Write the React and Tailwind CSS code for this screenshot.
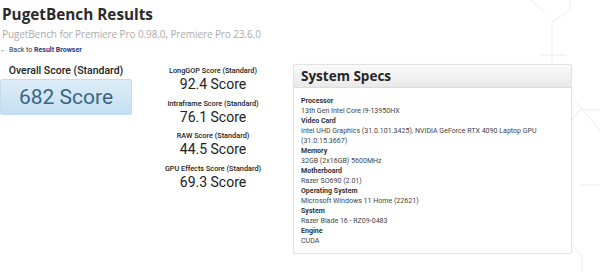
import React from "react";

const specs = [
  ["Processor", ["13th Gen Intel Core i9-13950HX"]],
  ["Video Card", ["Intel UHD Graphics (31.0.101.3425), NVIDIA GeForce RTX 4090 Laptop GPU", "(31.0.15.3667)"]],
  ["Memory", ["32GB (2x16GB) 5600MHz"]],
  ["Motherboard", ["Razer SO690 (2.01)"]],
  ["Operating System", ["Microsoft Windows 11 Home (22621)"]],
  ["System", ["Razer Blade 16 - RZ09-0483"]],
  ["Engine", ["CUDA"]],
];

const scores = [
  ["LongGOP Score (Standard)", "92.4 Score"],
  ["Intraframe Score (Standard)", "76.1 Score"],
  ["RAW Score (Standard)", "44.5 Score"],
  ["GPU Effects Score (Standard)", "69.3 Score"],
];

function Circuit() {
  return (
    <svg className="absolute right-0 top-0" width="90" height="272" viewBox="0 0 90 272" fill="none" stroke="#ececec" strokeWidth="1">
      <path d="M60 0 L60 10 L42 22 L42 70" />
      <circle cx="42" cy="72" r="1.5" />
      <path d="M30 55 L56 55" />
      <path d="M44 95 L44 140 L70 110 L90 110" />
      <path d="M40 160 L60 160" />
      <path d="M64 100 L90 130" />
      <path d="M42 175 L42 200" />
      <path d="M70 185 L90 185" />
      <path d="M46 215 L46 230 L72 255 L72 272" />
      <path d="M40 230 L30 240" />
      <path d="M20 0 L35 12" />
    </svg>
  );
}

export default function App() {
  return (
    <div className="relative w-[600px] h-[272px] overflow-hidden bg-white" style={{ fontFamily: "Roboto, sans-serif" }}>
      <Circuit />
      <div className="relative pl-[2px] pt-[4px]">
        <h1 className="text-[15.3px] leading-[20px] font-bold text-[#2b2b2b]" style={{ fontFamily: "'Open Sans', sans-serif" }}>
          PugetBench Results
        </h1>
        <div className="text-[10px] leading-[16px] text-[#ababab] mt-[2px] tracking-[-0.1px]" style={{ fontFamily: "'Open Sans', sans-serif" }}>
          PugetBench for Premiere Pro 0.98.0, Premiere Pro 23.6.0
        </div>
        <div className="text-[7px] leading-[12px] text-[#333] mt-[2px] -ml-[2px] flex items-center">
          <span className="text-[#777] mr-[2px]">&#8592;</span>
          <span>Back to&nbsp;</span>
          <span className="font-bold text-[#1c3a93]">Result Browser</span>
        </div>
      </div>
      <div className="relative flex mt-[9px]">
        <div className="w-[132px] flex flex-col items-center">
          <div className="text-[10.5px] leading-[12px] font-medium text-[#222]">Overall Score (Standard)</div>
          <div className="mt-[2px] w-[132px] h-[36px] rounded-[2px] bg-gradient-to-b from-[#deedf8] to-[#c3dff1] border border-[#c4dcec] flex items-center justify-center">
            <span className="text-[21px] leading-none text-[#3b6584]">682 Score</span>
          </div>
        </div>
        <div className="w-[126px] ml-[18px] flex flex-col items-center mt-[0px]">
          {scores.map(([label, value]) => (
            <div key={label} className="flex flex-col items-center h-[32.5px]">
              <div className="text-[7.3px] leading-[11px] font-medium text-[#222]">{label}</div>
              <div className="text-[14px] leading-[17px] text-[#222]">{value}</div>
            </div>
          ))}
        </div>
        <div className="ml-[17px] mt-[-1px] w-[279px] h-[190px] border border-[#e2e2e2] rounded-[2px] bg-white shadow-[0_0_2px_rgba(0,0,0,0.06)]">
          <div className="h-[23px] bg-gradient-to-b from-[#fafafa] to-[#e9e9e9] border-b border-[#dcdcdc] flex items-center pl-[7px]">
            <span className="text-[13.5px] font-bold text-[#262626]" style={{ fontFamily: "'Open Sans', sans-serif" }}>System Specs</span>
          </div>
          <div className="pl-[7px] pt-[8px] text-[7.05px] leading-[10px] text-[#444]">
            {specs.map(([label, vals]) => (
              <div key={label}>
                <div className="font-bold text-[#333]">{label}</div>
                {vals.map((v) => (
                  <div key={v}>{v}</div>
                ))}
              </div>
            ))}
          </div>
        </div>
      </div>
    </div>
  );
}
